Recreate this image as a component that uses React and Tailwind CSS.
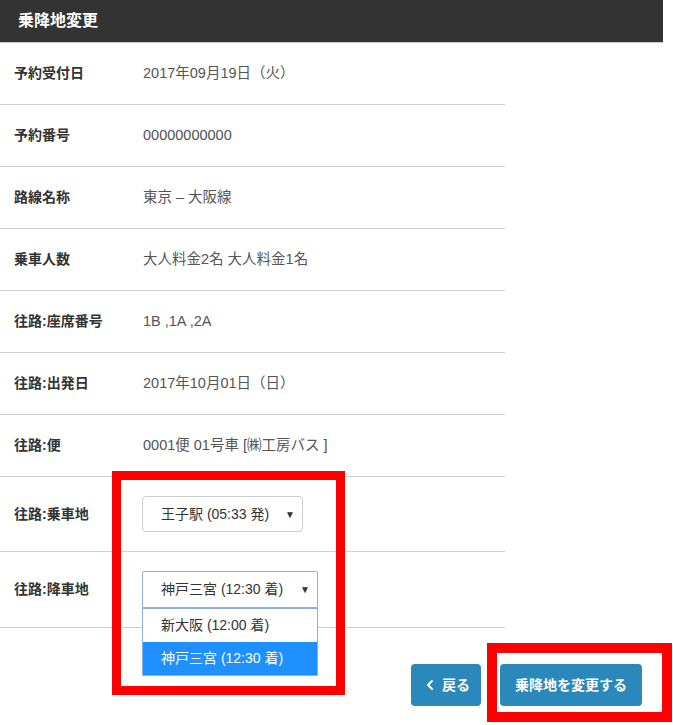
import { ChevronLeft } from "lucide-react"

const rows = [
    { label: "予約受付日", value: "2017年09月19日（火）" },
    { label: "予約番号", value: "00000000000" },
    { label: "路線名称", value: "東京 – 大阪線" },
    { label: "乗車人数", value: "大人料金2名 大人料金1名" },
    { label: "往路:座席番号", value: "1B ,1A ,2A" },
    { label: "往路:出発日", value: "2017年10月01日（日）" },
    { label: "往路:便", value: "0001便 01号車 [㈱工房バス ]" },
]

const font = { fontFamily: '"Liberation Sans", "Noto Sans CJK JP", sans-serif' }

function Label({ children }) {
    return <div className="w-[142px] pl-[14px] text-[14px] font-bold text-[#333] shrink-0">{children}</div>
}

export default function App() {
    return (
        <div className="relative w-[673px] h-[725px] bg-white overflow-hidden" style={font}>
            {/* Header */}
            <div className="w-[663px] h-[43px] bg-[#333] border-b border-[#c8c8c8] flex items-center pl-[18px]">
                <h1 className="text-white font-bold text-[16px]">乗降地変更</h1>
            </div>

            {/* Rows */}
            <div className="w-[505px]">
                {rows.map(row => (
                    <div key={row.label} className="h-[62px] border-b border-[#d0d0d0] flex items-center">
                        <Label>{row.label}</Label>
                        <div className="pl-px text-[14.5px] text-[#555]">{row.value}</div>
                    </div>
                ))}

                <div className="h-[75px] border-b border-[#d0d0d0] flex items-center">
                    <Label>往路:乗車地</Label>
                    <div className="w-[161px] h-[36px] border border-[#ccc] rounded-[4px] flex items-center justify-between pl-[18px] pr-[7px] text-[14px] text-[#333]">
                        <span>王子駅 (05:33 発)</span>
                        <span className="text-[10px]">▼</span>
                    </div>
                </div>

                <div className="h-[76px] border-b border-[#d0d0d0] flex items-center">
                    <Label>往路:降車地</Label>
                    <div className="relative">
                        <div className="w-[176px] h-[37px] border border-[#8ab0e6] rounded-t-[2px] flex items-center justify-between pl-[18px] pr-[7px] text-[14px] text-[#333]">
                            <span>神戸三宮 (12:30 着)</span>
                            <span className="text-[10px]">▼</span>
                        </div>
                        {/* open option list */}
                        <div className="absolute left-0 top-[37px] w-[176px] border border-[#8ab0e6] bg-white text-[14px] z-10">
                            <div className="h-[33px] flex items-center pl-[18px] text-[#333]">新大阪 (12:00 着)</div>
                            <div className="h-[33px] flex items-center pl-[18px] bg-[#1e90ff] text-white">神戸三宮 (12:30 着)</div>
                        </div>
                    </div>
                </div>
            </div>

            {/* Buttons */}
            <div className="w-[642px] flex justify-end gap-[19px] mt-[36px]">
                <button className="w-[70px] h-[42px] rounded-[4px] bg-[#2a88bb] text-white font-bold text-[14px] flex items-center justify-center gap-1">
                    <ChevronLeft className="w-4 h-4" strokeWidth={3} />
                    戻る
                </button>
                <button className="w-[142px] h-[42px] rounded-[4px] bg-[#2a88bb] text-white font-bold text-[14px]">
                    乗降地を変更する
                </button>
            </div>

            {/* Red annotation boxes */}
            <div className="absolute left-[112px] top-[471px] w-[233px] h-[224px] border-[9px] border-[#ff0000] pointer-events-none z-20" />
            <div className="absolute left-[487px] top-[643px] w-[185px] h-[79px] border-[10px] border-[#ff0000] pointer-events-none z-20" />
        </div>
    )
}
